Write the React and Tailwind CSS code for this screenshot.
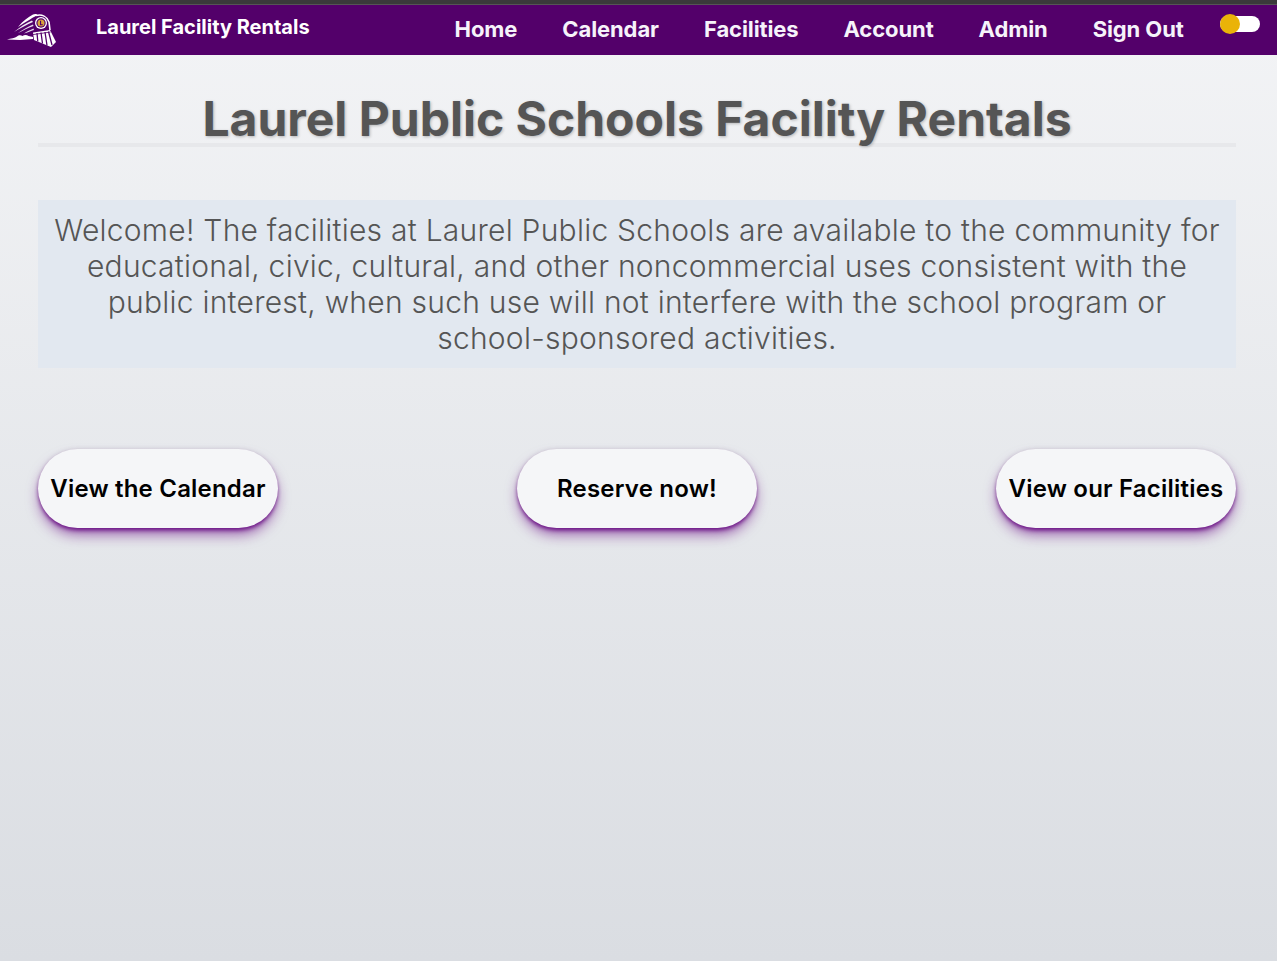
import React from 'react';

const Logo = () => (
  <svg width="60" height="42" viewBox="0 8 60 42" className="block">
    {/* stack and speed lines */}
    <path d="M18 27 C23 21 28 17 33 14.5 C35 13.5 37.5 14 38 15.5 C35 16 33 17.5 30 19.5 C26 21.5 22 24 18 27 Z" fill="#ffffff" />
    <path d="M14 32 C20 27 26 23 32 20.5 L33 22 C27 24.5 21 28 14 32 Z" fill="#f1eaf4" />
    <path d="M18 33 C23 29.5 28 26.5 33 24.5 L33.5 26 C28 28 23 30.5 18 33 Z" fill="#e6dcec" />
    <path d="M24 33.5 C27 31.5 30 30 33.5 28.5 L34 30 C31 31 27.5 32.5 24 33.5 Z" fill="#e6dcec" />
    {/* smoke along the track */}
    <path d="M7 39.5 C11 38.5 15 38 17 36.5 C18.5 35 21 35 22.5 36 C24.5 34.5 27 35 28.5 36 L33 37 L33 39 L20 40 Z" fill="#ffffff" />
    {/* boiler outline */}
    <path d="M36 15.5 C42 14 47 16.5 49 22 L50 30" stroke="#ffffff" strokeWidth="1.6" fill="none" />
    <circle cx="41" cy="23" r="6" fill="#ffffff" />
    <circle cx="41" cy="23" r="4.7" fill="#53006a" />
    <circle cx="41" cy="23" r="3.5" fill="#d8a23c" />
    <path d="M40 20.8 h1.1 v3.4 h1.7 v1 H40 Z" fill="#53006a" />
    {/* cowcatcher */}
    <path d="M33 32.5 L50 30 L56 42 L51 47 L34 40 Z" fill="#ffffff" />
    <path d="M37 33 L37.8 41.5 M41 32.5 L42.5 43.5 M45 32 L47 45.5 M48.5 31.5 L52 45" stroke="#53006a" strokeWidth="1.3" fill="none" />
    <path d="M33 34.6 L50.6 32" stroke="#53006a" strokeWidth="0.8" fill="none" />
  </svg>
);

const NavLink = ({ children }) => (
  <a className="text-[22px] leading-[28px] font-bold text-[#f6f3fa] whitespace-nowrap tracking-[-0.1px]">{children}</a>
);

const ActionButton = ({ children }) => (
  <button className="w-[240px] h-[79px] rounded-[40px] bg-[#f5f6f8] text-black text-[24px] font-semibold tracking-[0.2px] whitespace-nowrap shadow-[0_3px_4px_-1px_#6a0d85,0_8px_14px_-2px_rgba(106,13,133,0.65),0_0_5px_rgba(0,0,0,0.08)]">
    {children}
  </button>
);

export default function App() {
  return (
    <div className="min-h-[961px] flex flex-col font-['Inter',sans-serif] bg-gradient-to-b from-[#f3f4f6] to-[#dadde2]">
      <div className="h-[5px] bg-[#3a3a3a] border-b border-[#555]" />
      <nav className="h-[50px] bg-[#53006a] flex items-center">
        <div className="w-[96px] shrink-0 -mt-[2px]">
          <Logo />
        </div>
        <span className="text-[20px] font-bold text-white whitespace-nowrap -mt-[6px]">Laurel Facility Rentals</span>
        <div className="flex items-center gap-[45px] ml-[145px] -mt-[2px]">
          <NavLink>Home</NavLink>
          <NavLink>Calendar</NavLink>
          <NavLink>Facilities</NavLink>
          <NavLink>Account</NavLink>
          <NavLink>Admin</NavLink>
          <NavLink>Sign Out</NavLink>
        </div>
        <div className="relative ml-[36px] w-[40px] h-[16px] rounded-full bg-white -mt-[12px]">
          <span className="absolute left-0 top-[-2px] w-[20px] h-[20px] rounded-full bg-[#eab308]" />
        </div>
      </nav>
      <main className="flex flex-col pl-[38px] pr-[41px]">
        <h1 className="mt-[35px] text-[48px] leading-[58px] font-bold text-[#555555] text-center whitespace-nowrap [text-shadow:1px_1px_3px_rgba(0,0,0,0.25)] border-b-4 border-[#e7e8eb] h-[57px]">
          Laurel Public Schools Facility Rentals
        </h1>
        <p className="mt-[53px] bg-[#e2e8f0] px-[14px] py-[12px] text-[30px] leading-[36px] font-light tracking-[0.25px] text-[#555555] text-center">
          Welcome! The facilities at Laurel Public Schools are available to the community for educational, civic, cultural, and other noncommercial uses consistent with the public interest, when such use will not interfere with the school program or <span className="whitespace-nowrap">school-sponsored</span> activities.
        </p>
        <div className="mt-[81px] flex justify-between">
          <ActionButton>View the Calendar</ActionButton>
          <ActionButton>Reserve now!</ActionButton>
          <ActionButton>View our Facilities</ActionButton>
        </div>
      </main>
    </div>
  );
}
